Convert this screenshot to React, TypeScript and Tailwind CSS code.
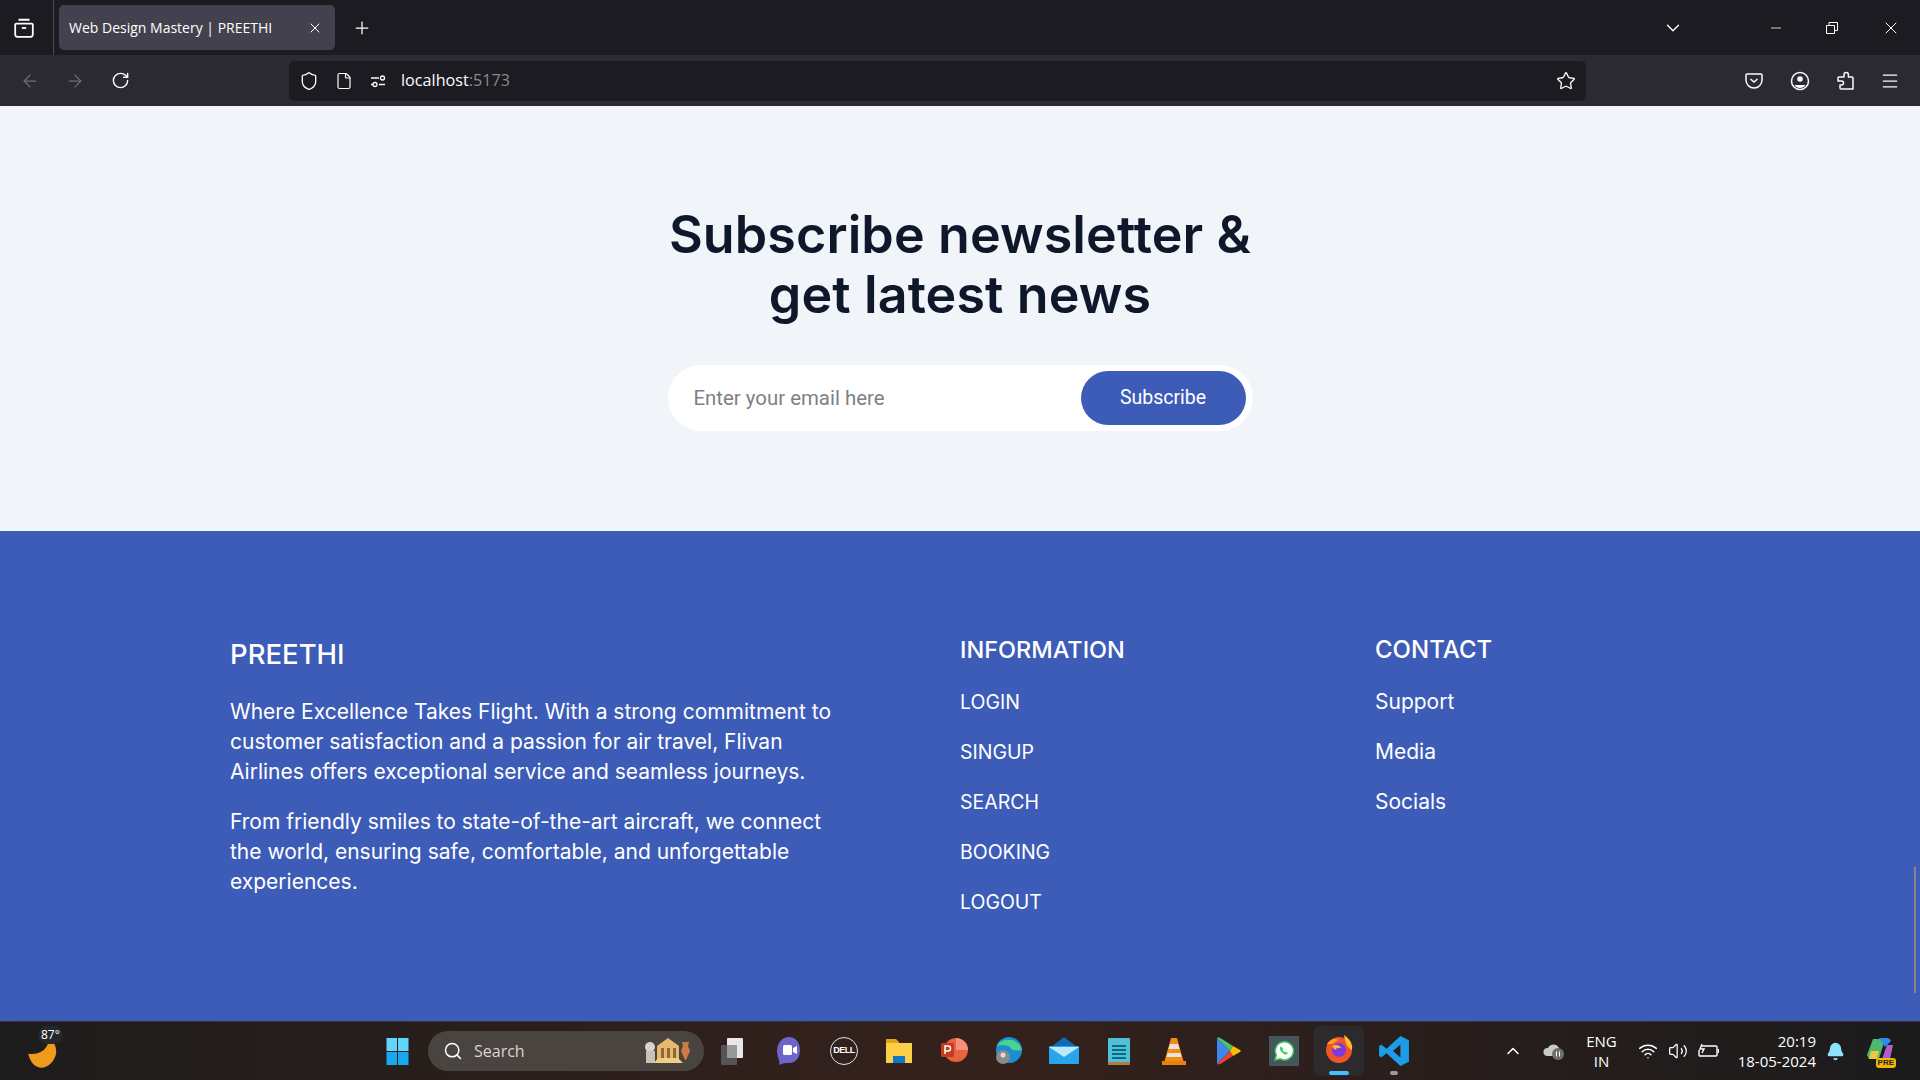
import { Bell, ChevronDown, ChevronUp, Minus, Plus, RotateCw, Search, Star, Volume2, Wifi, X, ArrowLeft, ArrowRight, Shield, File, Menu } from "lucide-react";

const infoLinks = ["LOGIN", "SINGUP", "SEARCH", "BOOKING", "LOGOUT"];
const contactLinks = ["Support", "Media", "Socials"];
const poppins = "font-['Inter',sans-serif]";
const segoe = "font-['Open_Sans',sans-serif]";

function TabBar() {
  return (
    <div className="flex h-[55px] items-center bg-[#1c1b22] text-white">
      <div className="flex h-full w-[54px] items-center justify-center border-r border-[#4a4a52] pr-[5px]">
        <svg viewBox="0 0 20 20" className="h-[22px] w-[22px]" fill="none" stroke="currentColor" strokeWidth="1.6">
          <path d="M5 2.500h10M3 6h14a1 1 0 0 1 1 1v9a2 2 0 0 1-2 2H4a2 2 0 0 1-2-2V7a1 1 0 0 1 1-1Z" />
          <path d="M8 10h4" />
        </svg>
      </div>
      <div className={`ml-[5px] flex h-[45px] w-[276px] items-center justify-between rounded-[5px] bg-[#42414d] pl-[10px] pr-[12px] text-[14px] ${segoe}`}>
        <span>Web Design Mastery | PREETHI</span>
        <X size={16} strokeWidth={1.5} />
      </div>
      <Plus size={20} strokeWidth={1.5} className="ml-[17px]" />
      <div className="flex-1" />
      <ChevronDown size={22} strokeWidth={1.5} className="mr-[84px]" />
      <Minus size={16} strokeWidth={1.2} className="mr-[41px]" />
      <svg viewBox="0 0 14 14" className="mr-[42px] h-[14px] w-[14px]" fill="none" stroke="currentColor">
        <path d="M1.500 4.500h8v8h-8zM4 4.500V1.500h8.500v8H9.500" />
      </svg>
      <X size={20} strokeWidth={1.2} className="mr-[19px]" />
    </div>
  );
}

function NavBar() {
  return (
    <div className="flex h-[51px] items-center bg-[#2b2a33] text-[#fbfbfe]">
      <ArrowLeft size={20} strokeWidth={1.5} className="ml-[20px] text-[#6f6e75]" />
      <ArrowRight size={20} strokeWidth={1.5} className="ml-[25px] text-[#6f6e75]" />
      <RotateCw size={19} strokeWidth={1.8} className="ml-[26px]" />
      <div className="ml-[159px] flex h-[40px] w-[1297px] items-center rounded-[5px] bg-[#1c1b22] px-[10px]">
        <Shield size={20} strokeWidth={1.6} />
        <File size={18} strokeWidth={1.6} className="ml-[16px]" />
        <svg viewBox="0 0 16 16" className="ml-[17px] h-[16px] w-[16px]" fill="none" stroke="currentColor" strokeWidth="1.3">
          <path d="M1 5h8M1 11.500h2M9 11.500h6" />
          <circle cx="12.500" cy="5" r="2" />
          <circle cx="5" cy="11.500" r="2" />
        </svg>
        <span className={`ml-[15px] text-[16.200px] ${segoe}`}>
          localhost<span className="text-[#8a898f]">:5173</span>
        </span>
        <div className="flex-1" />
        <Star size={20} strokeWidth={1.6} />
      </div>
      <div className="flex-1" />
      <svg viewBox="0 0 20 20" className="mr-[26px] h-5 w-5" fill="none" stroke="currentColor" strokeWidth="1.5">
        <path d="M3 3h14a1 1 0 0 1 1 1v5a8 8 0 0 1-16 0V4a1 1 0 0 1 1-1Z" />
        <path d="m6.500 8 3.500 3 3.500-3" />
      </svg>
      <svg viewBox="0 0 20 20" className="mr-[25px] h-5 w-5" fill="none" stroke="currentColor" strokeWidth="1.5">
        <circle cx="10" cy="10" r="8.500" />
        <circle cx="10" cy="8" r="2.800" fill="currentColor" stroke="none" />
        <path d="M4.500 14h11a6.500 6.500 0 0 1-11 0Z" fill="currentColor" stroke="none" />
      </svg>
      <svg viewBox="0 0 20 20" className="mr-[25px] h-5 w-5" fill="none" stroke="currentColor" strokeWidth="1.5" strokeLinejoin="round">
        <path d="M9 6V3.800a2.200 2.200 0 0 1 4.400 0V6H17a1 1 0 0 1 1 1v11H6a1 1 0 0 1-1-1v-3h1.500a2 2 0 0 0 0-4H3V7a1 1 0 0 1 1-1Z" />
      </svg>
      <Menu size={20} strokeWidth={1.5} className="mr-[20px]" />
    </div>
  );
}

function Newsletter() {
  return (
    <section className="flex h-[425px] flex-col items-center bg-[#f1f5f9]">
      <h2 className={`mt-[99px] text-center text-[52px] font-semibold leading-[60px] tracking-[0.1px] text-[#0f172a] ${poppins}`}>
        Subscribe newsletter &amp;<br />get latest news
      </h2>
      <form className="mt-[40px] flex h-[66px] w-[585px] items-center rounded-full bg-white py-[6px] pl-[6px] pr-[7px]">
        <input
          placeholder="Enter your email here"
          className="min-w-0 flex-1 bg-transparent pl-[20px] font-['Roboto',sans-serif] text-[20.400px] text-[#1f2937] outline-none placeholder:text-[#7d8088]"
        />
        <button type="button" className="h-[54px] w-[165px] rounded-full bg-[#3d5cb8] font-['Roboto',sans-serif] text-[19.500px] text-white">
          Subscribe
        </button>
      </form>
    </section>
  );
}

function Footer() {
  return (
    <footer className={`relative flex-1 bg-[#3d5cb8] text-white ${poppins}`}>
      <div className="mx-auto grid max-w-[1460px] grid-cols-[730px_415px_1fr] pt-[101px]">
        <div className="mt-[1px] w-[615px]">
          <h4 className="text-[27.500px] font-medium leading-[42px]">PREETHI</h4>
          <p className="mt-[22px] text-[21px] leading-[30px]">
            Where Excellence Takes Flight. With a strong commitment to customer satisfaction and a passion for air travel, Flivan Airlines offers exceptional service and seamless journeys.
          </p>
          <p className="mt-[20px] text-[21px] leading-[30px]">
            From friendly smiles to state-of-the-art aircraft, we connect the world, ensuring safe, comfortable, and unforgettable experiences.
          </p>
        </div>
        <div>
          <h4 className="text-[23.500px] font-medium leading-[36px]">INFORMATION</h4>
          <div className="mt-[19px] flex flex-col gap-[20px] text-[19.500px] leading-[30px]">
            {infoLinks.map((link) => <a key={link}>{link}</a>)}
          </div>
        </div>
        <div>
          <h4 className="text-[24px] font-medium leading-[36px]">CONTACT</h4>
          <div className="mt-[19px] flex flex-col gap-[20px] text-[21px] leading-[30px]">
            {contactLinks.map((link) => <a key={link}>{link}</a>)}
          </div>
        </div>
      </div>
      <div className="absolute right-[4px] top-[336px] h-[126px] w-[2px] bg-[#85868c]" />
    </footer>
  );
}

function TaskIcon({ children, active }: { children: React.ReactNode; active?: boolean }) {
  return (
    <div className={`relative flex h-[50px] w-[50px] items-center justify-center rounded-[5px] ${active ? "bg-[#2c2a2c]" : ""}`}>
      {children}
      {active && <div className="absolute bottom-[1px] h-[4px] w-[20px] rounded-full bg-[#47bfff]" />}
    </div>
  );
}

function Taskbar() {
  return (
    <div className={`flex h-[59px] items-center border-t border-[#33333a] bg-gradient-to-r from-[#1d1c1c] via-[#35211c] to-[#1b1b1c] text-white ${segoe}`}>
      <div className="relative ml-[27px] w-[41px]">
        <svg viewBox="0 0 24 24" className="mt-[8px] h-[30px] w-[30px]">
          <path d="M1 11c8 1 14-2 16-9l4 0c2 3 3 6 2 10-2 7-8 11-13 10C5 21 2 16 1 11Z" fill="#f09a1c" />
        </svg>
        <span className="absolute left-[11px] top-[-6px] rounded-full bg-[#24282b] px-[3px] text-[12px]">87°</span>
      </div>
      <svg viewBox="0 0 22 29" className="ml-[315px] h-[29px] w-[29px]">
        <path d="M0 1h10.500v13H0zM11.500 1H22v13H11.500z" fill="#62d6fa" />
        <path d="M0 15h10.500v13H0zM11.500 15H22v13H11.500z" fill="#19a8f0" />
      </svg>
      <div className="ml-[16px] flex h-[40px] w-[276px] items-center rounded-full bg-[#4a4441] pl-[15px] text-[16px] text-[#d8d5d2]">
        <Search size={20} strokeWidth={1.8} className="text-white" />
        <span className="ml-[11px]">Search</span>
        <svg viewBox="0 0 48 28" className="ml-auto mr-[8px] h-[28px] w-[56px]">
          <circle cx="6" cy="10" r="5" fill="#d9d3c8" />
          <path d="M2 26V14h9v12z" fill="#c8c2b6" />
          <path d="M13 9 24 1l11 8v13H13z" fill="#e6b96c" />
          <path d="M17 11h3v10h-3zM23 11h3v10h-3zM29 11h3v10h-3z" fill="#8a6a35" />
          <path d="M10 26l4-5h20l5 5z" fill="#f0cd86" />
          <path d="M38 5h7l-1 4 2 5-4 9h-1l-4-9 2-5z" fill="#cf7a49" />
        </svg>
      </div>
      <div className="ml-[5px] flex items-center gap-[5px]">
        <TaskIcon>
          <svg viewBox="0 0 30 30" className="h-[30px] w-[30px]">
            <rect x="2" y="9" width="16" height="20" rx="1" fill="#555" />
            <rect x="8" y="2" width="16" height="20" rx="1" fill="#e8e8e8" />
            <rect x="8" y="9" width="10" height="13" fill="#999" />
          </svg>
        </TaskIcon>
        <TaskIcon>
          <svg viewBox="0 0 30 30" className="h-[30px] w-[30px]">
            <path d="M15 1c7 0 11 6 11 13s-4 13-11 13c-3 0-6 0-10 2 1-3 0-5-1-8C1 11 6 1 15 1Z" fill="#6d65c9" />
            <rect x="9" y="9" width="9" height="10" rx="1.500" fill="#fff" />
            <path d="m19 12 4-2v8l-4-2z" fill="#fff" />
          </svg>
        </TaskIcon>
        <TaskIcon>
          <div className="flex h-[28px] w-[28px] items-center justify-center rounded-full border-[1.500px] border-[#e5e5e5] font-['Liberation_Sans',sans-serif] text-[9px] font-bold tracking-[-0.5px]">DELL</div>
        </TaskIcon>
        <TaskIcon>
          <svg viewBox="0 0 30 30" className="h-[30px] w-[30px]">
            <path d="M2 3h10l3 3v6H2z" fill="#e3a317" />
            <path d="M2 7h26v20H2z" fill="#fbcf4a" />
            <rect x="9" y="20" width="12" height="7" fill="#0e78c8" />
          </svg>
        </TaskIcon>
        <TaskIcon>
          <svg viewBox="0 0 30 30" className="h-[30px] w-[30px]">
            <circle cx="17" cy="14" r="12" fill="#e5633f" />
            <path d="M17 2a12 12 0 0 1 12 12H17z" fill="#f5917a" />
            <rect x="2" y="7" width="13" height="14" rx="1.500" fill="#c33c1d" />
            <path d="M6 18v-8h3a2 2 0 0 1 0 5H6" fill="none" stroke="#fff" strokeWidth="1.500" />
          </svg>
        </TaskIcon>
        <TaskIcon>
          <svg viewBox="0 0 30 30" className="h-[30px] w-[30px]">
            <circle cx="15" cy="14" r="13" fill="#1a8fd0" />
            <path d="M3 10C6 2 24 0 28 14c-4 1-11 1-12-3-3-2-10-2-13-1Z" fill="#4cd28e" />
            <circle cx="9" cy="21" r="7" fill="#8a8a8a" />
            <circle cx="9" cy="19" r="2.500" fill="#ddd" />
          </svg>
        </TaskIcon>
        <TaskIcon>
          <svg viewBox="0 0 30 30" className="h-[30px] w-[30px]">
            <path d="M15 1 28 11H2z" fill="#0f6cb5" />
            <rect x="0" y="10" width="30" height="18" rx="1" fill="#27a6ea" />
            <path d="M0 11 15 21 30 11z" fill="#bfe9fb" />
          </svg>
        </TaskIcon>
        <TaskIcon>
          <svg viewBox="0 0 24 30" className="h-[30px] w-[24px]">
            <rect x="1" y="2" width="22" height="27" rx="1" fill="#4fc1d6" />
            <rect x="1" y="26" width="22" height="3" fill="#b5793e" />
            <path d="M5 10h14M5 14h14M5 18h14M5 22h14" stroke="#0d6983" strokeWidth="2" />
          </svg>
        </TaskIcon>
        <TaskIcon>
          <svg viewBox="0 0 26 30" className="h-[30px] w-[26px]">
            <path d="M10 2h6l7 25H3z" fill="#f28c13" />
            <path d="M9 8h8l1.500 5h-11zM6.500 17h13l1 4h-15z" fill="#e8e3dc" />
            <rect x="1" y="25" width="24" height="4" fill="#e8820e" />
          </svg>
        </TaskIcon>
        <TaskIcon>
          <svg viewBox="0 0 26 30" className="h-[30px] w-[26px]">
            <path d="M1 2 14 15 1 28z" fill="#3d88f0" />
            <path d="M1 2c2-1 3 0 5 1l11 7-3 5z" fill="#49c16e" />
            <path d="M1 28c2 1 3 0 5-1l11-7-3-5z" fill="#ea4335" />
            <path d="m17 10 7 4c1 .6 1 1.400 0 2l-7 4-3-5z" fill="#fbbc04" />
          </svg>
        </TaskIcon>
        <TaskIcon>
          <div className="flex h-[30px] w-[30px] items-center justify-center bg-[#44565c]">
            <svg viewBox="0 0 24 24" className="h-[24px] w-[24px]">
              <path d="M3 21l1.400-5A9 9 0 1 1 8 19.700z" fill="#fff" stroke="#3ccf5e" strokeWidth="1.500" />
              <path d="M9 7.500c-2 1-1 4 1 6s4.500 3 6 1l-2-2-1 .8c-1-.4-2-1.500-2.500-2.500l.8-1z" fill="#3ccf5e" />
            </svg>
          </div>
        </TaskIcon>
        <TaskIcon active>
          <svg viewBox="0 0 30 30" className="mb-[4px] h-[30px] w-[30px]">
            <circle cx="15" cy="16" r="13" fill="#f0552a" />
            <path d="M20 1c6 4 9 9 8 15-5-2-7-8-8-15Z" fill="#ffbd2e" />
            <path d="M3 10c3-5 8-6 12-4-3 1-5 2-6 4z" fill="#ff9a2e" />
            <circle cx="15" cy="16" r="7" fill="#7a3cdc" />
            <path d="M8 12c4-2 8-1 9 2-3 0-5 0-6 2z" fill="#ffb63a" />
          </svg>
        </TaskIcon>
        <div className="relative flex h-[50px] w-[50px] items-center justify-center">
          <svg viewBox="0 0 30 30" className="h-[32px] w-[32px]">
            <path d="M21 1l8 4v20l-8 4L8 17l-5 4-2-1.500V10.500L3 9l5 4zm0 8-7 6 7 6z" fill="#1b9de8" />
          </svg>
          <div className="absolute bottom-[1px] h-[4px] w-[8px] rounded-full bg-[#9a9a9a]" />
        </div>
      </div>
      <div className="flex-1" />
      <ChevronUp size={20} strokeWidth={1.8} className="mr-[20px]" />
      <svg viewBox="0 0 22 18" className="mr-[21px] h-[18px] w-[22px]">
        <path d="M4 14a4 4 0 0 1 1-8 6 6 0 0 1 11 0v8z" fill="#c9c9c9" />
        <circle cx="15" cy="12" r="6" fill="#6f6f6f" />
        <path d="M13.500 9.500v5M16.500 9.500v5" stroke="#fff" />
      </svg>
      <div className="mr-[21px] flex flex-col items-center text-[15px] leading-[20px]">
        <span>ENG</span>
        <span>IN</span>
      </div>
      <Wifi size={20} strokeWidth={1.8} className="mr-[10px]" />
      <Volume2 size={20} strokeWidth={1.5} className="mr-[9px]" />
      <svg viewBox="0 0 22 16" className="mr-[19px] h-[16px] w-[22px]" fill="none" stroke="currentColor" strokeWidth="1.400">
        <path d="M4 3h15a1 1 0 0 1 1 1v8a1 1 0 0 1-1 1H3a1 1 0 0 1-1-1V7" />
        <path d="M5 1 3 6h4l-2 4" />
        <path d="M21.500 6v4" />
      </svg>
      <div className="mr-[10px] flex flex-col items-end text-[15px] leading-[20px]">
        <span>20:19</span>
        <span>18-05-2024</span>
      </div>
      <Bell size={19} fill="#8de3fb" stroke="#8de3fb" className="mr-[20px]" />
      <div className="relative mr-[25px] h-[28px] w-[30px]">
        <svg viewBox="0 0 30 28" className="h-[28px] w-[30px]">
          <path d="M8 2h12l-6 20H4L2 18Z" fill="#4fb86f" />
          <path d="M14 1h8c2 0 3 1 4 3l-6 6Z" fill="#2a8cf0" />
          <path d="M22 8h6l-3 14h-8Z" fill="#b55bd0" />
          <path d="M6 14h8l-2 8H4Z" fill="#ebc83c" />
        </svg>
        <span className="absolute bottom-[-3px] right-[-1px] rounded-[3px] bg-[#f2b705] px-[2px] font-['Liberation_Sans',sans-serif] text-[8px] font-bold leading-[10px] text-[#222]">PRE</span>
      </div>
    </div>
  );
}

export default function App() {
  return (
    <div className="flex h-[1080px] flex-col overflow-hidden">
      <TabBar />
      <NavBar />
      <Newsletter />
      <Footer />
      <Taskbar />
    </div>
  );
}
